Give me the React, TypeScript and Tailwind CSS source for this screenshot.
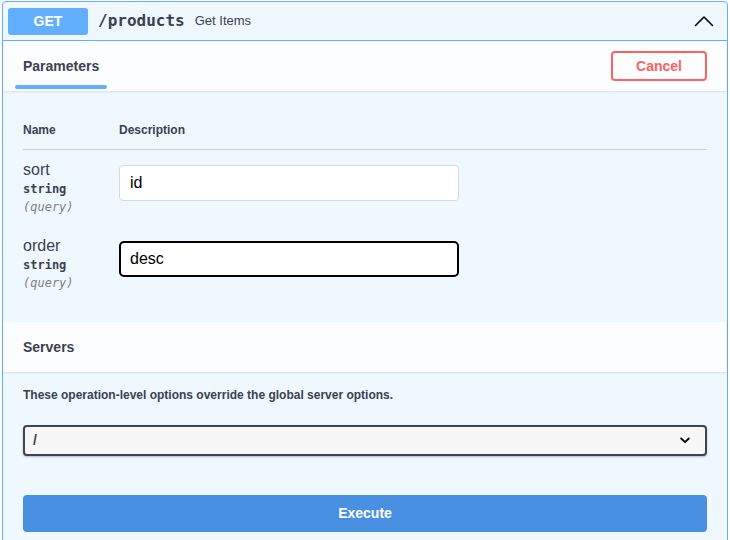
import React from "react";

const sans = { fontFamily: '"Liberation Sans", Arial, sans-serif' };

export default function App() {
  return (
    <div
      className="w-[730px] h-[540px] overflow-hidden bg-white pl-[2px] pr-[2px] pt-[1px] text-[#3b4151]"
      style={sans}
    >
      <div className="border border-[#61affe] rounded-[4px] bg-[#eff7ff] h-[620px]">
        {/* Summary header */}
        <div className="h-[39px] flex items-center px-[5px] border-b border-[#61affe]">
          <span className="w-[80px] h-[27px] flex items-center justify-center rounded-[3px] bg-[#61affe] text-white text-[14px] font-bold">
            GET
          </span>
          <span
            className="pl-[10px] text-[16px] font-bold text-[#3b4151]"
            style={{ fontFamily: '"DejaVu Sans Mono", "Liberation Mono", monospace' }}
          >
            /products
          </span>
          <span className="pl-[10px] text-[13px] text-[#3b4151]">Get Items</span>
          <div className="flex-1" />
          <svg width="20" height="12" viewBox="0 0 20 12" className="mr-[8px]">
            <polyline
              points="1.5,10.5 10,2 18.5,10.5"
              fill="none"
              stroke="#000"
              strokeWidth="1.6"
              strokeLinecap="round"
              strokeLinejoin="round"
            />
          </svg>
        </div>

        {/* Parameters header */}
        <div className="h-[50px] flex items-center justify-between px-5 bg-white/80 shadow-[0_1px_2px_rgba(0,0,0,0.1)] relative">
          <div className="relative h-full flex items-center">
            <span className="text-[14px] font-bold">Parameters</span>
            <span className="absolute left-[-8px] right-[-8px] bottom-[2px] h-[4px] bg-[#61affe] rounded-[2px]" />
          </div>
          <button className="w-[96px] h-[30px] rounded-[4px] border-2 border-[#ff6060] bg-transparent text-[#ff6060] text-[14px] font-bold flex items-center justify-center">
            Cancel
          </button>
        </div>

        {/* Parameters body */}
        <div className="px-5 pt-5 pb-5">
          <div className="flex border-b border-[#3b4151]/20 py-[12px] text-[12px] font-bold leading-[14px]">
            <div className="w-[96px]">Name</div>
            <div>Description</div>
          </div>
          {[
            { name: "sort", value: "id", focus: false },
            { name: "order", value: "desc", focus: true },
          ].map((p) => (
            <div key={p.name} className="flex py-[10px]">
              <div className="w-[96px] flex flex-col">
                <span className="text-[16px] leading-[20px]">{p.name}</span>
                <span
                  className="text-[12px] font-bold leading-[18px]"
                  style={{ fontFamily: '"DejaVu Sans Mono", "Liberation Mono", monospace' }}
                >
                  string
                </span>
                <span
                  className="text-[12px] italic leading-[18px] text-[#808080]"
                  style={{ fontFamily: '"DejaVu Sans Mono", "Liberation Mono", monospace' }}
                >
                  (query)
                </span>
              </div>
              <div className="pt-[5px]">
                <div
                  className={
                    p.focus
                      ? "w-[340px] h-[36px] bg-white rounded-[5px] border-2 border-black flex items-center px-[9px] text-[16px] text-black"
                      : "w-[340px] h-[36px] bg-white rounded-[4px] border border-[#d9d9d9] flex items-center px-[10px] text-[16px] text-black"
                  }
                >
                  {p.value}
                </div>
              </div>
            </div>
          ))}
        </div>

        {/* Servers header */}
        <div className="h-[50px] flex items-center px-5 bg-white/80 shadow-[0_1px_2px_rgba(0,0,0,0.1)]">
          <span className="text-[14px] font-bold">Servers</span>
        </div>

        {/* Servers body */}
        <div className="px-5 pt-[16px]">
          <p className="text-[12px] font-bold leading-[14px]">
            These operation-level options override the global server options.
          </p>
          <div className="mt-[23px] h-[31px] rounded-[4px] border-2 border-[#41444e] bg-[#f7f7f7] shadow-[0_1px_2px_0_rgba(0,0,0,0.25)] flex items-center justify-between pl-[8px] pr-[15px]">
            <span className="text-[14px] font-bold">/</span>
            <svg width="10" height="7" viewBox="0 0 10 7">
              <polyline
                points="1.2,1.5 5,5.2 8.8,1.5"
                fill="none"
                stroke="#000"
                strokeWidth="1.8"
                strokeLinecap="round"
                strokeLinejoin="round"
              />
            </svg>
          </div>
          <button className="mt-[39px] w-full h-[37px] rounded-[4px] bg-[#4990e2] text-white text-[14px] font-bold flex items-center justify-center">
            Execute
          </button>
        </div>
      </div>
    </div>
  );
}
